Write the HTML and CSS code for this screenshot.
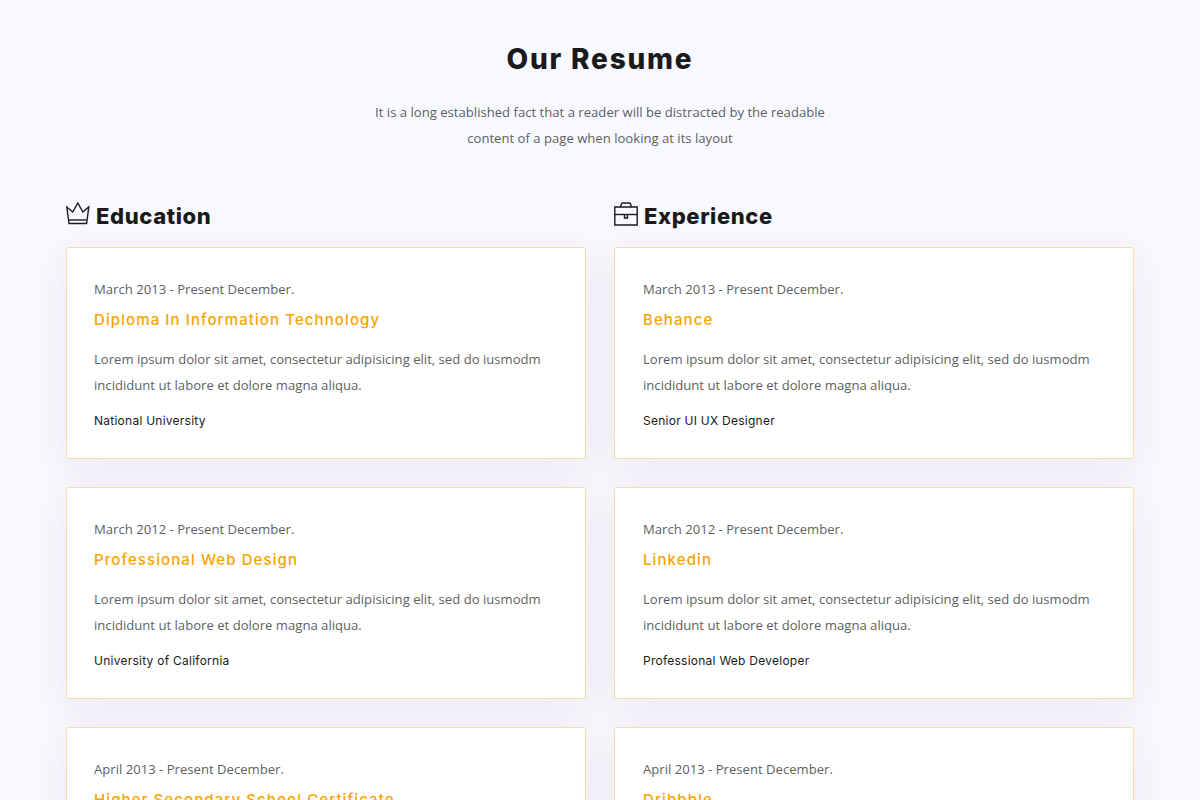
FILE: index.html
```html
<!DOCTYPE html>
<html lang="en">
<head>
  <meta charset="UTF-8">
  <title>Our Resume</title>
  <link rel="stylesheet" href="styles.css">
</head>
<body>

  <section class="resume">
    <div class="section-title">
      <h2>Our Resume</h2>
      <p>It is a long established fact that a reader will be distracted by the readable<br>content of a page when looking at its layout</p>
    </div>

    <div class="resume-grid">
      <div class="resume-col">
        <h3 class="col-title">
          <svg class="col-icon" viewBox="0 0 24 24" fill="none" stroke="#1a1a1a" stroke-width="1.4">
            <path d="M3 21.500 .8 5 6.700 10 11.800 1 16.900 10 22.800 5 20.600 21.500z"/>
            <path d="M3 18h17.600"/>
          </svg>
          Education
        </h3>

        <div class="resume-card">
          <p class="date">March 2013 - Present December.</p>
          <h4>Diploma In Information Technology</h4>
          <p class="text">Lorem ipsum dolor sit amet, consectetur adipisicing elit, sed do iusmodm incididunt ut labore et dolore magna aliqua.</p>
          <p class="place">National University</p>
        </div>

        <div class="resume-card">
          <p class="date">March 2012 - Present December.</p>
          <h4>Professional Web Design</h4>
          <p class="text">Lorem ipsum dolor sit amet, consectetur adipisicing elit, sed do iusmodm incididunt ut labore et dolore magna aliqua.</p>
          <p class="place">University of California</p>
        </div>

        <div class="resume-card">
          <p class="date">April 2013 - Present December.</p>
          <h4>Higher Secondary School Certificate</h4>
          <p class="text">Lorem ipsum dolor sit amet, consectetur adipisicing elit, sed do iusmodm incididunt ut labore et dolore magna aliqua.</p>
          <p class="place">Secondary School</p>
        </div>
      </div>

      <div class="resume-col">
        <h3 class="col-title">
          <svg class="col-icon" viewBox="0 0 24 24" fill="none" stroke="#1a1a1a" stroke-width="1.4">
            <path d="M.8 5h22.400v18H.8z"/>
            <path d="M.8 12.500h22.400"/>
            <path d="M10.500 12.500v3.500h3v-3.500"/>
            <path d="M6.500 5 7.500 1.800Q7.800 1 8.800 1h6.400Q16.200 1 16.500 1.800L17.500 5"/>
          </svg>
          Experience
        </h3>

        <div class="resume-card">
          <p class="date">March 2013 - Present December.</p>
          <h4>Behance</h4>
          <p class="text">Lorem ipsum dolor sit amet, consectetur adipisicing elit, sed do iusmodm incididunt ut labore et dolore magna aliqua.</p>
          <p class="place">Senior UI UX Designer</p>
        </div>

        <div class="resume-card">
          <p class="date">March 2012 - Present December.</p>
          <h4>Linkedin</h4>
          <p class="text">Lorem ipsum dolor sit amet, consectetur adipisicing elit, sed do iusmodm incididunt ut labore et dolore magna aliqua.</p>
          <p class="place">Professional Web Developer</p>
        </div>

        <div class="resume-card">
          <p class="date">April 2013 - Present December.</p>
          <h4>Dribbble</h4>
          <p class="text">Lorem ipsum dolor sit amet, consectetur adipisicing elit, sed do iusmodm incididunt ut labore et dolore magna aliqua.</p>
          <p class="place">Graphic Designer</p>
        </div>
      </div>
    </div>
  </section>

</body>
</html>
```

FILE: styles.css
```css
html, body {
  height: 800px;
  overflow: hidden;
}

body {
  margin: 0;
  background-color: #f8f9ff;
  font-family: "Open Sans", sans-serif;
  font-size: 13.12px;
  color: #5f5f5f;
}

.resume {
  width: 1068px;
  margin: 0 auto;
  padding-top: 40px;
}

.section-title {
  text-align: center;
  margin-bottom: 48px;
}

.section-title h2 {
  margin: 0 0 21px;
  font-family: Inter, sans-serif;
  font-size: 28px;
  line-height: 38px;
  font-weight: 800;
  letter-spacing: 1.8px;
  color: #1a1a1a;
}

.section-title p {
  margin: 0;
  line-height: 26px;
}

.resume-grid {
  display: grid;
  grid-template-columns: 520px 520px;
  gap: 28px;
}

.col-title {
  display: flex;
  align-items: center;
  gap: 6px;
  margin: 0 0 14px;
  font-family: Inter, sans-serif;
  font-size: 22px;
  line-height: 34px;
  font-weight: 800;
  letter-spacing: 0.6px;
  color: #1a1a1a;
}

.col-icon {
  width: 24px;
  height: 24px;
  margin-top: -4px;
}

.resume-card {
  box-sizing: border-box;
  height: 212px;
  margin-bottom: 28px;
  padding: 28px 27px;
  background-color: #fff;
  border: 1px solid #fbdc9f;
  border-radius: 3px;
  box-shadow: 0 10px 40px rgba(50, 55, 90, 0.08);
}

.resume-col + .resume-col .resume-card {
  padding-left: 28px;
}

.resume-card p {
  margin: 0;
}

.date {
  line-height: 26px;
}

.resume-card h4 {
  margin: 5px 0 13px;
  font-family: Inter, sans-serif;
  font-size: 15px;
  line-height: 26px;
  font-weight: 500;
  letter-spacing: 1.1px;
  color: #f7a400;
}

.text {
  line-height: 26px;
}

.resume-card .place {
  margin-top: 13px;
  font-family: Inter, sans-serif;
  font-size: 12px;
  line-height: 20px;
  letter-spacing: 0.25px;
  color: #1a1a1a;
}
```
